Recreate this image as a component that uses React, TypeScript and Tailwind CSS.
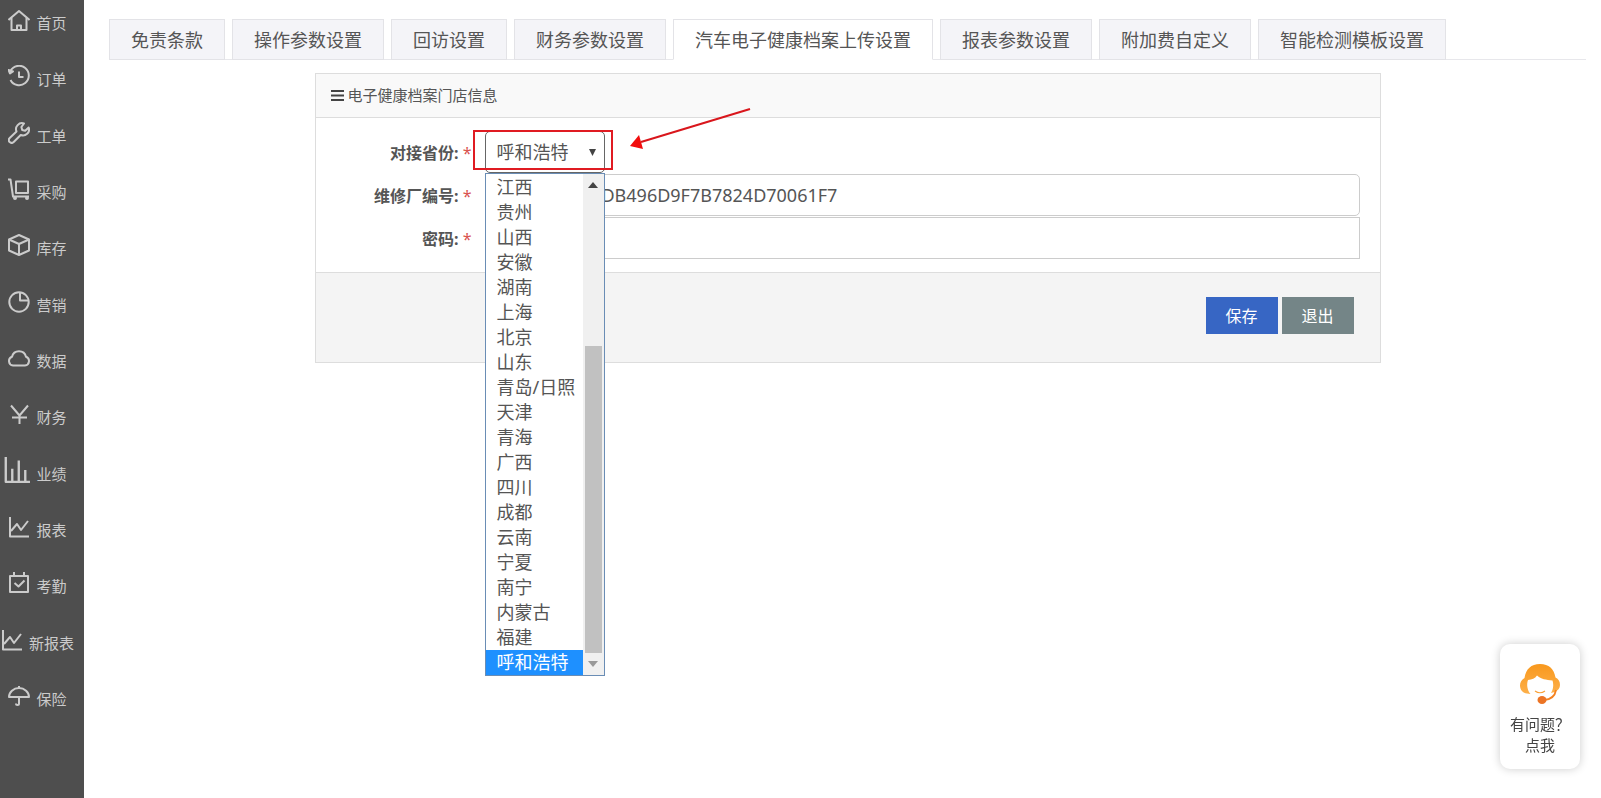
import { useState } from "react";
import type { ReactNode } from "react";
import { clsx } from "clsx";

interface NavItem {
  name: string;
  icon: ReactNode;
  large?: boolean;
}

const chartIcon = (
  <>
    <path d="M2 1v19.500h19" />
    <path d="M3 15l6-7 4 6 7-9" />
  </>
);

const navigation: NavItem[] = [
  {
    name: "首页",
    icon: (
      <>
        <path d="M0.500 11L11 2l10.500 9" />
        <path d="M3.500 9v12h15V9M9 21v-4.500h4V21" />
      </>
    ),
  },
  {
    name: "订单",
    icon: (
      <>
        <path d="M2.500 6A9.700 9.700 0 1 1 2.500 15M11 6.500V12h4.500" />
        <path d="M0.500 5l4.500 1.500-3 2z" fill="currentColor" />
      </>
    ),
  },
  {
    name: "工单",
    icon: (
      <path d="M16 1.500a6 6 0 0 0-7.500 8L1.700 16a2.600 2.600 0 0 0 4 4l7-7a6 6 0 0 0 8-7.500l-3.500 3.300-3-.8-.8-3z" />
    ),
  },
  {
    name: "采购",
    icon: (
      <>
        <path d="M0 1.500h2.500L5 18.500h16M8 3.500h12V15H8z" />
        <circle cx="7" cy="20" r="1" />
        <circle cx="19" cy="20" r="1" />
      </>
    ),
  },
  {
    name: "库存",
    icon: (
      <>
        <path d="M11 1l10 4.500v11L11 21 1 16.500v-11z" />
        <path d="M1 5.500L11 10l10-4.500M11 10v11" />
      </>
    ),
  },
  {
    name: "营销",
    icon: (
      <>
        <circle cx="11" cy="11" r="9.700" />
        <path d="M12 1.500V9.500h8.500" />
      </>
    ),
  },
  {
    name: "数据",
    icon: (
      <path d="M5 18.500h12a4.500 4.500 0 0 0 1-8.700 7.200 7.200 0 0 0-14 0 4.500 4.500 0 0 0 1 8.700z" />
    ),
  },
  {
    name: "财务",
    icon: <path d="M3 2.500l8.500 10L20 2.500M11.500 12.500V21M4 14.500h15" />,
  },
  {
    name: "业绩",
    large: true,
    icon: <path d="M1.500 0v21H22M7 10v11M12.500 3v18M18 11v10" />,
  },
  { name: "报表", icon: chartIcon },
  {
    name: "考勤",
    icon: (
      <>
        <path d="M2 4h18v16H2zM6 0v4M16 0v4" />
        <path d="M6.500 11l4 3.500 6-6" />
      </>
    ),
  },
  { name: "新报表", icon: chartIcon },
  {
    name: "保险",
    icon: (
      <>
        <path d="M1 12a10 9 0 0 1 20 0zM11 1v2" />
        <path d="M11 12v6.500a1.500 1.500 0 0 1-3 0" />
      </>
    ),
  },
];

const tabs = [
  "免责条款",
  "操作参数设置",
  "回访设置",
  "财务参数设置",
  "汽车电子健康档案上传设置",
  "报表参数设置",
  "附加费自定义",
  "智能检测模板设置",
];

const provinces = [
  "江西",
  "贵州",
  "山西",
  "安徽",
  "湖南",
  "上海",
  "北京",
  "山东",
  "青岛/日照",
  "天津",
  "青海",
  "广西",
  "四川",
  "成都",
  "云南",
  "宁夏",
  "南宁",
  "内蒙古",
  "福建",
  "呼和浩特",
];

function Sidebar() {
  return (
    <nav className="flex h-screen w-[84px] flex-none flex-col justify-between bg-[#4e4e4e] pt-[6px] pr-[9px] pb-[86px]">
      {navigation.map((item) => (
        <a
          key={item.name}
          href="#"
          className="flex h-[30px] items-start justify-center gap-[6px] text-[15px] whitespace-nowrap text-[#cbcbcb]"
        >
          <svg
            viewBox="0 0 22 22"
            fill="none"
            stroke="currentColor"
            strokeWidth="2"
            strokeLinejoin="round"
            className={clsx(
              "flex-none",
              item.large ? "-ml-1 h-[26px] w-[26px]" : "mt-[3px] h-[22px] w-[22px]",
            )}
          >
            {item.icon}
          </svg>
          <span className="pt-[2px] leading-[30px]">{item.name}</span>
        </a>
      ))}
    </nav>
  );
}

interface FieldRowProps {
  id: string;
  label: string;
  children: ReactNode;
}

function FieldRow({ id, label, children }: FieldRowProps) {
  return (
    <div className="flex items-center gap-[13px]">
      <label htmlFor={id} className="w-[136px] flex-none pt-[2px] text-right text-base font-bold">
        {label}: <span className="font-normal text-[#d9534f]">*</span>
      </label>
      {children}
    </div>
  );
}

interface ProvinceSelectProps {
  value: string;
  onChange: (value: string) => void;
}

function ProvinceSelect({ value, onChange }: ProvinceSelectProps) {
  return (
    <div className="relative w-[120px]">
      <select
        id="province"
        value={value}
        onChange={(e) => onChange(e.target.value)}
        className="h-[42px] w-full appearance-none rounded-[5px] border border-[#666] bg-white pl-[11px] text-lg outline-none"
      >
        {provinces.map((name) => (
          <option key={name}>{name}</option>
        ))}
      </select>
      <svg
        viewBox="0 0 8 8"
        className="pointer-events-none absolute top-[18px] right-[9px] h-[7px] w-[7px] fill-[#444]"
      >
        <path d="M0 0h8L4 8z" />
      </svg>

      {/* Open option list */}
      <div className="absolute top-full left-0 z-10 flex w-full border border-[#6a8db5] bg-white">
        <ul role="listbox" aria-label="对接省份" className="flex-1 pt-px">
          {provinces.map((name) => (
            <li
              key={name}
              role="option"
              aria-selected={name === value}
              onClick={() => onChange(name)}
              className={clsx(
                "h-[25px] cursor-default pl-[11px] text-lg leading-[25px] whitespace-nowrap",
                name === value && "bg-[#1e90ff] text-white",
              )}
            >
              {name}
            </li>
          ))}
        </ul>
        <div className="flex w-[21px] flex-none flex-col items-center bg-[#f0f0f0] py-2">
          <svg viewBox="0 0 10 6" className="h-[6px] w-[10px] fill-[#444]">
            <path d="M0 6h10L5 0z" />
          </svg>
          <div className="mt-auto mb-2 h-[307px] w-[17px] bg-[#c1c1c1]" />
          <svg viewBox="0 0 10 6" className="h-[6px] w-[10px] fill-[#999]">
            <path d="M0 0h10L5 6z" />
          </svg>
        </div>
      </div>

      {/* Callout */}
      <div className="pointer-events-none absolute -top-px -left-3 z-20 h-10 w-[140px] border-2 border-[#e01b22]" />
      <svg
        viewBox="0 0 124 44"
        className="pointer-events-none absolute -top-6 left-[144px] z-20 h-[44px] w-[124px]"
      >
        <path d="M121 2L12 35" stroke="#d9161c" strokeWidth="2" fill="none" />
        <path d="M1 39L10 28l4 14z" fill="#f20d0d" />
      </svg>
    </div>
  );
}

function HelpCard() {
  return (
    <button
      type="button"
      className="fixed right-[21px] bottom-[29px] flex h-[125px] w-20 flex-col items-center rounded-[10px] bg-white pt-5 text-[15px] leading-[21px] text-[#444] shadow-[0_0_10px_rgba(0,0,0,0.2)]"
    >
      <svg viewBox="0 0 40 40" className="mb-[10px] h-10 w-10">
        <defs>
          <linearGradient id="hair" x1="0" y1="0" x2="0" y2="1">
            <stop offset="0" stopColor="#f8981d" />
            <stop offset="1" stopColor="#fdb04a" />
          </linearGradient>
        </defs>
        <path
          d="M20 0C11 0 6 5 4.500 14 1.500 16 0 18 0 21.500c0 4.500 3 7.500 7 8l3.500.5C7 26 6.500 20 8 16c4-.5 7-1.500 9-4.500 4 3.500 9 4.500 15.500 5 1.500 5 .5 9.500-1.500 12.500l3.500-1c3.500-1.500 5.500-3.500 5.500-7s-1.500-6-4.500-7.500C34 5 29 0 20 0z"
          fill="url(#hair)"
        />
        <path d="M15 27q5 3.500 10 0" stroke="#f9a13a" strokeWidth="1.200" fill="none" />
        <path d="M36 26c-1 6-5 9.500-12 10" stroke="#f58220" strokeWidth="1.800" fill="none" />
        <ellipse cx="22" cy="36" rx="4.500" ry="4" fill="#ec7424" />
      </svg>
      <span>有问题？</span>
      <span>点我</span>
    </button>
  );
}

export default function App() {
  const [activeTab, setActiveTab] = useState(tabs[4]);
  const [province, setProvince] = useState("呼和浩特");

  return (
    <div className="flex min-h-screen bg-white font-['Noto_Sans','Noto_Sans_CJK_SC',sans-serif] text-[#555]">
      <Sidebar />

      {/* Main content */}
      <main className="min-w-0 flex-1 pt-[19px] pr-[15px] pl-[25px]">
        <div role="tablist" className="flex gap-[7px] border-b border-[#e7e7eb]">
          {tabs.map((tab) => (
            <button
              key={tab}
              type="button"
              role="tab"
              aria-selected={tab === activeTab}
              onClick={() => setActiveTab(tab)}
              className={clsx(
                "-mb-px h-[41px] border border-[#e3e3e7] px-[21px] text-lg whitespace-nowrap",
                tab === activeTab ? "border-b-white bg-white" : "bg-[#f4f4f8]",
              )}
            >
              {tab}
            </button>
          ))}
        </div>

        <form className="mx-auto mt-[13px] w-[1066px] max-w-full border border-[#ddd]">
          <div className="flex h-[44px] items-center gap-1 border-b border-[#ddd] bg-[#f9f9f9] px-[15px] text-[15px]">
            <svg viewBox="0 0 13 11" className="h-[11px] w-[13px] fill-[#444]">
              <path d="M0 0h13v2H0zM0 4.500h13v2H0zM0 9h13v2H0z" />
            </svg>
            <h2>电子健康档案门店信息</h2>
          </div>

          <div className="flex flex-col gap-px py-[13px] pr-5 pl-5">
            <FieldRow id="province" label="对接省份">
              <ProvinceSelect value={province} onChange={setProvince} />
            </FieldRow>
            <FieldRow id="code" label="维修厂编号">
              <input
                id="code"
                type="text"
                defaultValue="2A51C0E843DB496D9F7B7824D70061F7"
                className="h-[42px] min-w-0 flex-1 rounded-[5px] border border-[#ccc] px-[11px] text-lg outline-none"
              />
            </FieldRow>
            <FieldRow id="password" label="密码">
              <input
                id="password"
                type="password"
                className="h-[42px] min-w-0 flex-1 border border-[#ccc] px-[11px] text-lg outline-none"
              />
            </FieldRow>
          </div>

          <div className="flex justify-end gap-1 border-t border-[#ddd] bg-[#f4f4f4] px-[26px] pt-6 pb-7 text-base text-white">
            <button type="button" className="h-[37px] w-[72px] bg-[#3766c4]">
              保存
            </button>
            <button type="button" className="h-[37px] w-[72px] bg-[#748587]">
              退出
            </button>
          </div>
        </form>
      </main>

      <HelpCard />
    </div>
  );
}
